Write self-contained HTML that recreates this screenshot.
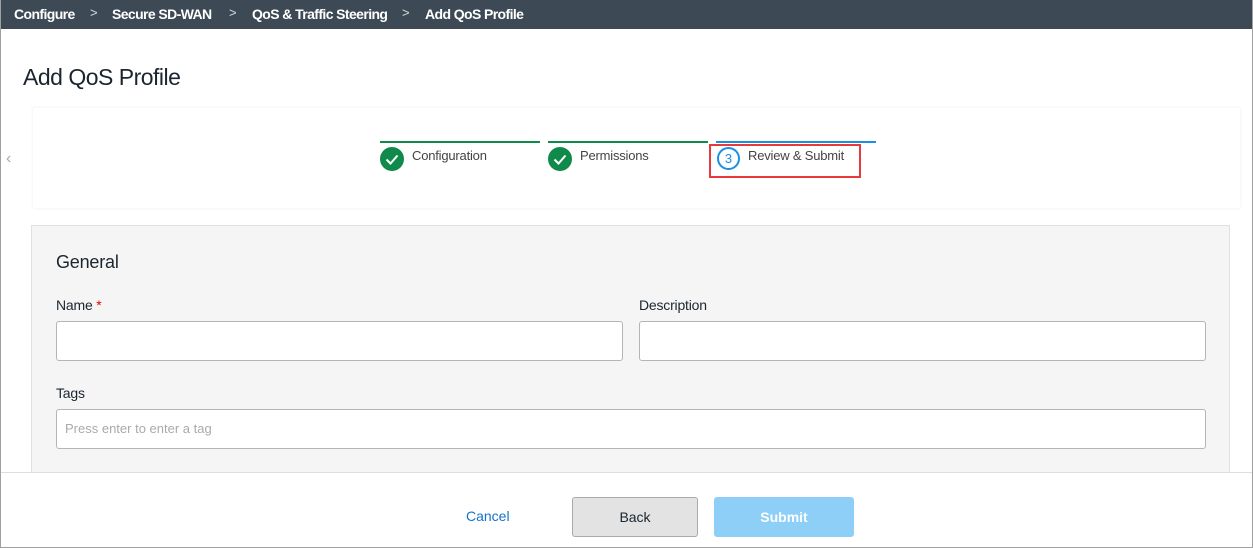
<!DOCTYPE html>
<html><head><style>
*{box-sizing:border-box;margin:0;padding:0}
body{width:1253px;height:548px;background:#fff;font-family:"Liberation Sans",sans-serif;position:relative;overflow:hidden}
.bd{position:absolute;left:0;top:0;width:1253px;height:548px;border:1px solid #a0a0a0;border-top:none;pointer-events:none}
.top{position:absolute;left:0;top:0;width:1253px;height:29px;background:#3d4a55;color:#fff;font-size:14px;font-weight:bold;letter-spacing:-0.6px}
.top span{position:absolute;top:6px}
.top i{position:absolute;top:5px;font-style:normal;font-weight:normal;font-size:13px;color:#ddd}
h1{position:absolute;left:23px;top:64px;font-size:23px;font-weight:normal;color:#1b2530;letter-spacing:-0.5px}
.card{position:absolute;left:33px;top:108px;width:1207px;height:100px;background:#fff;box-shadow:0 0 3px rgba(0,0,0,.08)}
.chev{position:absolute;left:6px;top:150px;color:#aaa;font-size:16px}
.step{position:absolute;top:141px;width:160px;height:2px}
.lbl{position:absolute;top:148px;font-size:13px;color:#444;letter-spacing:-0.2px}
.chk{position:absolute;top:147px;width:24px;height:24px;border-radius:50%;background:#0f8a4a}
.panel{position:absolute;left:31px;top:225px;width:1199px;height:248px;background:#f5f5f5;border:1px solid #e0e0e0;border-bottom:none}
.f{position:absolute;font-size:14px;color:#1b2530;letter-spacing:-0.2px}
.in{position:absolute;height:40px;background:#fff;border:1px solid #b5b5b5;border-radius:3px}
.foot{position:absolute;left:0;top:472px;width:1253px;height:1px;background:#ddd}
.btn{position:absolute;top:497px;height:40px;border-radius:3px;font-size:14px;text-align:center;line-height:38px}
</style></head><body>
<div class="top">
<span style="left:14px">Configure</span><i style="left:90px">&gt;</i>
<span style="left:112px">Secure SD-WAN</span><i style="left:229px">&gt;</i>
<span style="left:252px">QoS &amp; Traffic Steering</span><i style="left:402px">&gt;</i>
<span style="left:425px">Add QoS Profile</span>
</div>
<h1>Add QoS Profile</h1>
<div class="card"></div>
<div class="chev">&#8249;</div>
<div class="step" style="left:380px;background:#0f8a4a"></div>
<div class="step" style="left:548px;background:#0f8a4a"></div>
<div class="step" style="left:716px;background:#1a8fe3"></div>
<div class="chk" style="left:380px"><svg width="24" height="24"><path d="M6.5 12.5l4 4 7-8" stroke="#fff" stroke-width="2" fill="none"/></svg></div>
<div class="chk" style="left:548px"><svg width="24" height="24"><path d="M6.5 12.5l4 4 7-8" stroke="#fff" stroke-width="2" fill="none"/></svg></div>
<div style="position:absolute;left:717px;top:147px;width:23px;height:23px;border:2px solid #1a8fe3;border-radius:50%;color:#1a8fe3;font-size:13px;text-align:center;line-height:19px">3</div>
<div class="lbl" style="left:412px">Configuration</div>
<div class="lbl" style="left:580px">Permissions</div>
<div class="lbl" style="left:748px">Review &amp; Submit</div>
<div style="position:absolute;left:709px;top:144px;width:152px;height:34px;border:2px solid #e8393d"></div>
<div class="panel"></div>
<div class="f" style="left:56px;top:252px;font-size:18px">General</div>
<div class="f" style="left:56px;top:297px">Name <span style="color:#e00">*</span></div>
<div class="f" style="left:639px;top:297px">Description</div>
<div class="in" style="left:56px;top:321px;width:567px"></div>
<div class="in" style="left:639px;top:321px;width:567px"></div>
<div class="f" style="left:56px;top:385px">Tags</div>
<div class="in" style="left:56px;top:409px;width:1150px;font-size:13px;color:#aaa;padding:11px 8px">Press enter to enter a tag</div>
<div class="foot"></div>
<div class="btn" style="left:466px;color:#1673c8">Cancel</div>
<div class="btn" style="left:572px;width:126px;background:#e3e3e3;border:1px solid #aaa;color:#1b2530">Back</div>
<div class="btn" style="left:714px;width:140px;background:#8ecff8;color:#fff;font-weight:bold;line-height:40px">Submit</div>
<div class="bd"></div>
</body></html>
